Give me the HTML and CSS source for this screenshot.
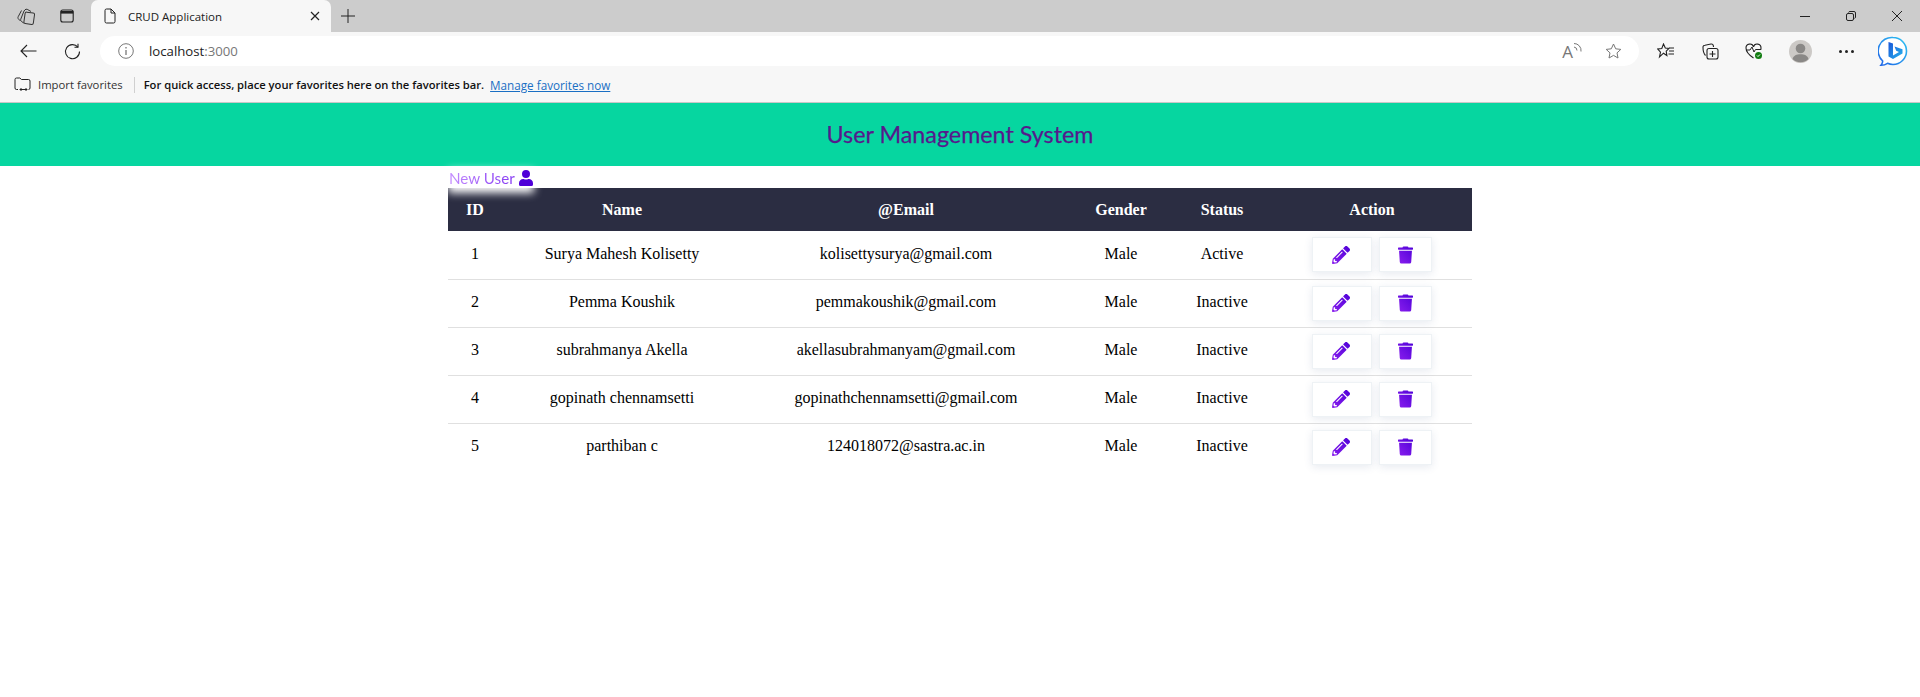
FILE: index.html
```html
<!DOCTYPE html>
<html lang="en">
<head>
<meta charset="utf-8">
<title>CRUD Application</title>
<link rel="stylesheet" href="styles.css">
</head>
<body>
<svg class="defs" width="0" height="0" aria-hidden="true">
  <defs>
    <linearGradient id="pg" x1="1" y1="0" x2="0" y2="1">
      <stop offset="0" stop-color="#4f00d8"/>
      <stop offset="1" stop-color="#8a1fee"/>
    </linearGradient>
    <linearGradient id="bing" x1="0" y1="0" x2="1" y2="1">
      <stop offset="0" stop-color="#1a55d8"/>
      <stop offset="1" stop-color="#26b4ee"/>
    </linearGradient>
    <linearGradient id="bing-ring" x1="1" y1="0" x2="0" y2="1">
      <stop offset="0" stop-color="#2fc4f2"/>
      <stop offset="1" stop-color="#1f62e6"/>
    </linearGradient>
    <symbol id="i-pen" viewBox="0 0 512 512"><path fill="url(#pg)" d="M497.900 142.100l-46.100 46.100c-4.700 4.700-12.300 4.700-17 0l-111-111c-4.700-4.700-4.700-12.300 0-17l46.100-46.100c18.700-18.700 49.100-18.700 67.900 0l60.100 60.100c18.800 18.700 18.800 49.100 0 67.900zM284.200 99.800L21.600 362.400.400 483.900c-2.900 16.400 11.400 30.600 27.800 27.800l121.500-21.300 262.600-262.600c4.700-4.700 4.700-12.300 0-17l-111-111c-4.800-4.700-12.400-4.700-17.100 0zM124.100 339.900c-5.500-5.500-5.500-14.300 0-19.800l154-154c5.500-5.500 14.300-5.500 19.800 0s5.500 14.300 0 19.800l-154 154c-5.500 5.500-14.300 5.500-19.800 0zM88 424h48v36.300l-64.500 11.300-31.100-31.100L51.700 376H88v48z"/></symbol>
    <symbol id="i-trash" viewBox="0 0 448 512"><path fill="url(#pg)" d="M432 32H312l-9.400-18.700A24 24 0 0 0 281.100 0H166.800a23.700 23.700 0 0 0-21.400 13.300L136 32H16A16 16 0 0 0 0 48v32a16 16 0 0 0 16 16h416a16 16 0 0 0 16-16V48a16 16 0 0 0-16-16zM53.200 467a48 48 0 0 0 47.900 45h245.800a48 48 0 0 0 47.900-45L416 128H32z"/></symbol>
  </defs>
</svg>

<div class="browser">
  <div class="tabstrip">
    <span class="strip-icon">
      <svg width="18" height="17" viewBox="0 0 18 17" fill="none" stroke="#333" stroke-width="1"><rect x="7.500" y="4.500" width="9.500" height="11.500" rx="1.500" transform="rotate(8 12 10)"/><path d="M6.800 15 4.500 13.500C3.700 13 3.500 12 3.800 11L7 3"/><path d="M3.500 13 1.500 11C.8 10.300.8 9.500 1.200 8.700L4.500 2.500"/><path d="M7 3 8 1.800C8.500 1.200 9.500 1 10.200 1.300L14 3.500"/></svg>
    </span>
    <span class="strip-icon">
      <svg width="14" height="14" viewBox="0 0 14 14" fill="none" stroke="#222" stroke-width="1.100"><rect x=".8" y="1" width="12.400" height="12" rx="2"/><path d="M.8 3.300h12.400" stroke-width="2.600"/></svg>
    </span>
    <div class="tab">
      <svg class="tab-doc" width="12" height="16" viewBox="0 0 12 16" fill="none" stroke="#222" stroke-width="1"><path d="M1 2.500A1.500 1.500 0 0 1 2.500 1H7l4 4v8.500a1.500 1.500 0 0 1-1.500 1.500h-7A1.500 1.500 0 0 1 1 13.500z"/><path d="M7 1v4h4"/></svg>
      <span class="tab-title">CRUD Application</span>
      <svg class="tab-close" width="10" height="10" viewBox="0 0 10 10" stroke="#222" stroke-width="1.200"><path d="M1 1l8 8M9 1l-8 8"/></svg>
    </div>
    <span class="new-tab">
      <svg width="14" height="14" viewBox="0 0 14 14" stroke="#222" stroke-width="1"><path d="M7 0v14M0 7h14"/></svg>
    </span>
    <span class="strip-fill"></span>
    <span class="win-btn"><svg width="10" height="10" viewBox="0 0 10 10" stroke="#222"><path d="M0 5.500h10"/></svg></span>
    <span class="win-btn"><svg width="10" height="10" viewBox="0 0 10 10" fill="none" stroke="#222"><rect x=".5" y="2.500" width="7" height="7" rx="1.500"/><path d="M2.500 1.500A1.500 1.500 0 0 1 4 .5h4A1.500 1.500 0 0 1 9.500 2v4a1.500 1.500 0 0 1-1 1.400"/></svg></span>
    <span class="win-btn"><svg width="10" height="10" viewBox="0 0 10 10" stroke="#222"><path d="M0 0l10 10M10 0 0 10"/></svg></span>
  </div>

  <div class="toolbar">
    <span class="nav-btn"><svg width="17" height="14" viewBox="0 0 17 14" fill="none" stroke="#222" stroke-width="1.100"><path d="M16.500 7H1M7 1 1 7l6 6"/></svg></span>
    <span class="nav-btn"><svg width="17" height="17" viewBox="0 0 17 17" fill="none" stroke="#222" stroke-width="1.100"><path d="M14 .8V4.300h-3.500"/><path d="M13.900 4.200A7 7 0 1 0 15.500 8.500"/></svg></span>
    <div class="urlbar">
      <span class="url-info"><svg width="16" height="16" viewBox="0 0 16 16" fill="none" stroke="#777"><circle cx="8" cy="8" r="7.300"/><path d="M8 7v5M8 4v1.400" stroke-width="1.300"/></svg></span>
      <span class="url-text">localhost<span class="url-port">:3000</span></span>
      <span class="url-fill"></span>
      <span class="url-action"><span class="read-a">A</span><svg width="9" height="12" viewBox="0 0 9 12" fill="none" stroke="#777"><path d="M1 5a3.500 3.500 0 0 1 3 3.500M1 1.500a7 7 0 0 1 7 8"/></svg></span>
      <span class="url-action star"><svg width="17" height="16" viewBox="0 0 17 16" fill="none" stroke="#777"><path d="M8.500 1l2.200 4.800 5.100.6-3.800 3.500 1 5.100-4.500-2.600L4 15l1-5.100L1.200 6.400l5.100-.6z"/></svg></span>
    </div>
    <span class="tool-btn"><svg width="18" height="16" viewBox="0 0 18 16" fill="none" stroke="#222" stroke-width="1.100"><path d="M6.500 1l1.800 4 3.700.5-2.800 2.700.7 4.300-3.400-2.300L2.500 14l1-4.800L.8 6l4-.5zM12 5h5M12 8h5M11.500 11H17"/></svg></span>
    <span class="tool-btn"><svg width="17" height="17" viewBox="0 0 17 17" fill="none" stroke="#222" stroke-width="1.100"><rect x="5" y="5.500" width="11" height="10.500" rx="2"/><path d="M10.500 8v6M7.500 11h6"/><path d="M3.500 12.500C2 11 1 8 1 4.500A2 2 0 0 1 3 2.200L9 1a2 2 0 0 1 2.300 1.500L11.500 4"/></svg></span>
    <span class="tool-btn"><svg width="18" height="18" viewBox="0 0 18 18" fill="none"><path d="M8.500 16C4 13 1 9.500 1 6a3.800 3.800 0 0 1 7.500-1A3.800 3.800 0 0 1 16 6c0 .6-.1 1.200-.3 1.800" stroke="#222" stroke-width="1.100"/><path d="M1 8h4l2-3 2 5 1.500-2.500H16" stroke="#222" stroke-width="1"/><circle cx="13.500" cy="13.500" r="3.500" fill="#107c10"/><path d="M12 13.500l1 1 2-2" stroke="#fff"/></svg></span>
    <span class="profile-btn"><svg width="23" height="23" viewBox="0 0 23 23"><circle cx="11.500" cy="11.500" r="11.500" fill="#ccc9c6"/><circle cx="11.500" cy="8.500" r="4.800" fill="#8a8886"/><path d="M3.500 19c1-3.400 4-4.800 8-4.800s7 1.400 8 4.800a11.500 11.500 0 0 1-16 0z" fill="#8a8886"/></svg></span>
    <span class="more-btn"><i class="dot"></i><i class="dot"></i><i class="dot"></i></span>
    <span class="bing-btn"><svg width="30" height="31" viewBox="0 0 30 31"><path d="M15 1.500a13.500 13.500 0 0 1 0 27c-2 0-3.800-.4-5.500-1.200-1.800 1.300-4 2-6.500 2 1.100-1.300 1.700-2.700 1.700-4.300A13.500 13.500 0 0 1 15 1.500z" fill="#fff" stroke="url(#bing-ring)" stroke-width="1.600"/><path d="M10.500 6l4.500 1.600v11.900l6-3.500-2.800-1.300-1.700-4.200 8 2.800v4.200l-9.500 5.600-4.500-2.500z" fill="url(#bing)"/></svg></span>
  </div>

  <div class="favbar">
    <svg class="fav-folder" width="17" height="15" viewBox="0 0 17 15" fill="none" stroke="#222"><path d="M4 12.500H2.500A1.500 1.500 0 0 1 1 11V2.500A1.500 1.500 0 0 1 2.500 1h3.300l1.700 1.500h7A1.500 1.500 0 0 1 16 4v7a1.500 1.500 0 0 1-1.500 1.500"/><path d="M6 12.500h7M7.500 11 6 12.500 7.500 14M11.500 11l1.500 1.500-1.500 1.500"/></svg>
    <span class="fav-import">Import favorites</span>
    <span class="fav-sep"></span>
    <span class="fav-hint">For quick access, place your favorites here on the favorites bar.</span>
    <a class="fav-link" href="#">Manage favorites now</a>
  </div>
</div>

<header class="app-header"><h1 class="app-title">User Management System</h1></header>

<main class="container">
  <a class="new-user" href="#">
    <span class="new-user-text">New User</span>
    <svg width="14" height="16" viewBox="0 0 448 512"><path fill="#4f00d8" d="M224 256a128 128 0 1 0 0-256 128 128 0 0 0 0 256zm89.600 32h-16.700a174.100 174.100 0 0 1-145.800 0h-16.700A134.400 134.400 0 0 0 0 422.400V464a48 48 0 0 0 48 48h352a48 48 0 0 0 48-48v-41.600A134.400 134.400 0 0 0 313.600 288z"/></svg>
  </a>

  <table class="users">
    <colgroup>
      <col class="c-id"><col class="c-name"><col class="c-email"><col class="c-gender"><col class="c-status"><col class="c-action">
    </colgroup>
    <thead>
      <tr><th>ID</th><th>Name</th><th>@Email</th><th>Gender</th><th>Status</th><th>Action</th></tr>
    </thead>
    <tbody>
      <tr><td>1</td><td>Surya Mahesh Kolisetty</td><td>kolisettysurya@gmail.com</td><td>Male</td><td>Active</td>
        <td><div class="actions"><a class="btn btn-edit" href="#"><svg width="18" height="18"><use href="#i-pen"/></svg></a><a class="btn btn-del" href="#"><svg width="15" height="18"><use href="#i-trash"/></svg></a></div></td></tr>
      <tr><td>2</td><td>Pemma Koushik</td><td>pemmakoushik@gmail.com</td><td>Male</td><td>Inactive</td>
        <td><div class="actions"><a class="btn btn-edit" href="#"><svg width="18" height="18"><use href="#i-pen"/></svg></a><a class="btn btn-del" href="#"><svg width="15" height="18"><use href="#i-trash"/></svg></a></div></td></tr>
      <tr><td>3</td><td>subrahmanya Akella</td><td>akellasubrahmanyam@gmail.com</td><td>Male</td><td>Inactive</td>
        <td><div class="actions"><a class="btn btn-edit" href="#"><svg width="18" height="18"><use href="#i-pen"/></svg></a><a class="btn btn-del" href="#"><svg width="15" height="18"><use href="#i-trash"/></svg></a></div></td></tr>
      <tr><td>4</td><td>gopinath chennamsetti</td><td>gopinathchennamsetti@gmail.com</td><td>Male</td><td>Inactive</td>
        <td><div class="actions"><a class="btn btn-edit" href="#"><svg width="18" height="18"><use href="#i-pen"/></svg></a><a class="btn btn-del" href="#"><svg width="15" height="18"><use href="#i-trash"/></svg></a></div></td></tr>
      <tr><td>5</td><td>parthiban c</td><td>124018072@sastra.ac.in</td><td>Male</td><td>Inactive</td>
        <td><div class="actions"><a class="btn btn-edit" href="#"><svg width="18" height="18"><use href="#i-pen"/></svg></a><a class="btn btn-del" href="#"><svg width="15" height="18"><use href="#i-trash"/></svg></a></div></td></tr>
    </tbody>
  </table>
</main>
</body>
</html>
```

FILE: styles.css
```css
* { box-sizing: border-box; }
html, body { margin: 0; padding: 0; background: #fff; }
body { font-family: "Liberation Serif", serif; height: 697px; overflow: hidden; }
.defs { display: block; height: 0; }
a { text-decoration: none; }

/* Browser chrome */
.browser { font-family: "Open Sans", "Noto Sans", sans-serif; color: #222; }
.tabstrip { display: flex; align-items: center; height: 32px; padding-left: 5px; background: #ccc; }
.strip-icon { display: flex; align-items: center; justify-content: center; width: 41px; height: 32px; }
.tab { display: flex; align-items: center; width: 240px; height: 32px; margin-left: 4px; padding: 0 11px 0 13px; background: #f7f7f7; border-radius: 7px 7px 0 0; }
.tab-doc { flex: none; }
.tab-title { flex: 1; margin-left: 12px; font-size: 11.500px; white-space: nowrap; }
.tab-close { flex: none; }
.new-tab { display: flex; align-items: center; justify-content: center; width: 34px; height: 32px; }
.strip-fill { flex: 1; }
.win-btn { display: flex; align-items: center; justify-content: center; width: 46px; height: 32px; }

.toolbar { display: flex; align-items: center; height: 38px; padding-left: 6px; background: #f7f7f7; }
.nav-btn { display: flex; align-items: center; justify-content: center; width: 44px; height: 36px; }
.urlbar { display: flex; align-items: center; width: 1539px; height: 30px; margin: 0 5px 0 6px; padding: 0 10px; background: #fff; border-radius: 15px; }
.url-info { display: flex; align-items: center; justify-content: center; width: 32px; }
.url-text { margin-left: 7px; font-size: 13.200px; color: #222; }
.url-port { color: #777; }
.url-fill { flex: 1; }
.url-action { display: flex; align-items: flex-start; justify-content: center; width: 32px; color: #777; }
.url-action.star { margin-left: 9px; }
.read-a { font-size: 17px; line-height: 19px; font-weight: 400; }
.tool-btn { display: flex; align-items: center; justify-content: center; width: 44px; height: 36px; }
.profile-btn { display: flex; align-items: center; justify-content: center; width: 48px; height: 36px; }
.more-btn { display: flex; align-items: center; justify-content: center; gap: 3px; width: 44px; height: 36px; }
.dot { display: block; width: 3px; height: 3px; border-radius: 50%; background: #222; }
.bing-btn { display: flex; align-items: center; justify-content: center; width: 50px; height: 36px; }

.favbar { display: flex; align-items: center; height: 33px; padding: 0 0 3px 14px; background: #f7f7f7; border-bottom: 1px solid #c8c8c8; white-space: nowrap; }
.fav-folder { flex: none; }
.fav-import { margin-left: 7px; color: #333; font-size: 11.300px; }
.fav-sep { width: 1px; height: 16px; margin: 0 9px 0 11px; background: #d0d0d0; }
.fav-hint { color: #111; font-size: 11.200px; font-weight: 600; }
.fav-link { margin-left: 6px; color: #1a6fc4; font-size: 11.700px; text-decoration: underline; }

/* App */
.app-header { display: flex; align-items: center; justify-content: center; height: 63px; padding-bottom: 1px; background: #06d6a0; }
.app-title { margin: 0; font-family: "Lato", sans-serif; font-size: 23.300px; font-weight: 400; color: #561a8c; -webkit-text-stroke: .25px #561a8c; }

.container { width: 1024px; margin: 0 auto; }
.new-user { display: inline-flex; align-items: center; gap: 4px; height: 21px; margin: 1px 0 0 1px; vertical-align: top; background: #fff; box-shadow: 0 4px 8px 1px #fff; }
.new-user-text { font-family: "Lato", sans-serif; font-size: 15.200px; background: linear-gradient(90deg, #c48cff, #8438f2); -webkit-background-clip: text; background-clip: text; color: transparent; }

.users { width: 1024px; border-collapse: collapse; table-layout: fixed; font-size: 16px; color: #000; }
.c-id { width: 54px; } .c-name { width: 240px; } .c-email { width: 328px; }
.c-gender { width: 102px; } .c-status { width: 100px; } .c-action { width: 200px; }
.users th { height: 43px; padding: 0; font-weight: 700; color: #fff; background: #2b2d42; }
.users td { height: 48px; padding: 0 0 2px; text-align: center; border-bottom: 1px solid #e0e0e0; }
.users td:last-child { padding-bottom: 0; }
.users tr:last-child td { border-bottom: 0; }
.actions { display: flex; justify-content: center; gap: 7px; }
.btn { display: flex; align-items: center; justify-content: center; height: 35px; background: #fff; border: 1px solid #eef2f5; box-shadow: 0 2px 8px rgba(60, 80, 130, .12); }
.btn-edit { width: 60px; padding-right: 3px; }
.btn-del { width: 53px; }
```
